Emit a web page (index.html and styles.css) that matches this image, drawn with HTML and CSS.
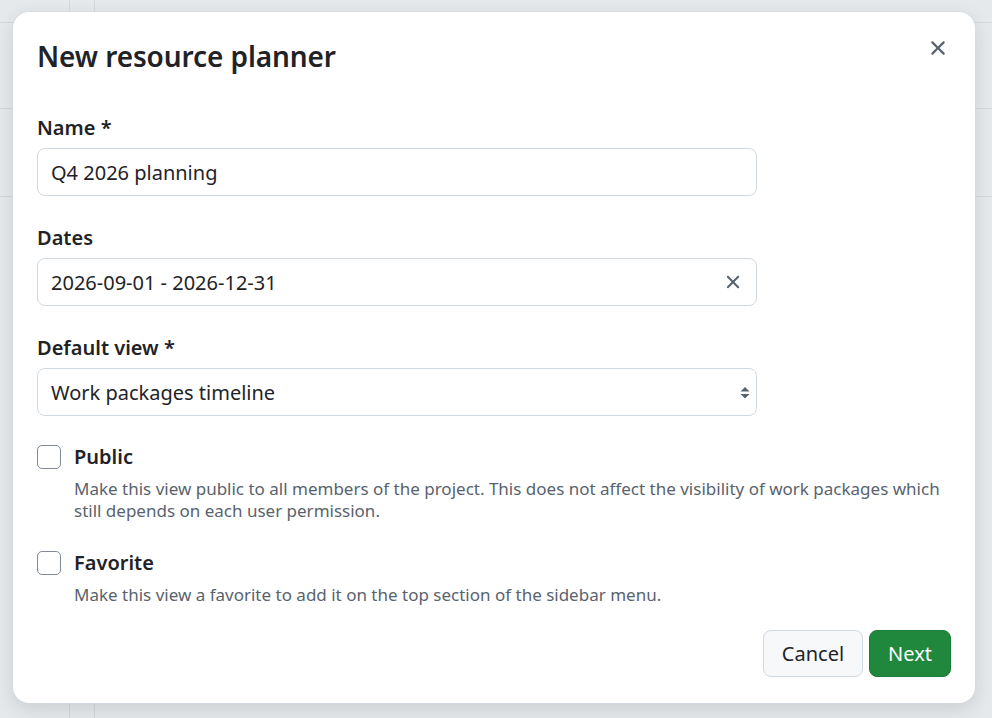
FILE: index.html
```html
<!DOCTYPE html>
<html lang="en">
<head>
<meta charset="utf-8">
<title>New resource planner</title>
<link rel="stylesheet" href="styles.css">
</head>
<body>
<div class="page">
  <section class="dialog" role="dialog" aria-labelledby="dlg-title">
    <header class="dialog-header">
      <h1 id="dlg-title" class="dialog-title">New resource planner</h1>
      <button class="icon-btn close-btn" type="button" aria-label="Close">
        <svg width="24" height="24" viewBox="0 0 16 16" aria-hidden="true"><path d="M3.72 3.72a.75.75 0 0 1 1.06 0L8 6.94l3.22-3.22a.749.749 0 0 1 1.275.326.749.749 0 0 1-.215.734L9.06 8l3.22 3.22a.749.749 0 0 1-.326 1.275.749.749 0 0 1-.734-.215L8 9.06l-3.22 3.22a.751.751 0 0 1-1.042-.018.751.751 0 0 1-.018-1.042L6.94 8 3.72 4.78a.75.75 0 0 1 0-1.06Z"/></svg>
      </button>
    </header>

    <form class="dialog-body">
      <div class="field">
        <label class="field-label" for="name">Name *</label>
        <div class="control">
          <input id="name" class="control-input" type="text" value="Q4 2026 planning">
        </div>
      </div>

      <div class="field">
        <label class="field-label" for="dates">Dates</label>
        <div class="control">
          <input id="dates" class="control-input" type="text" value="2026-09-01 - 2026-12-31">
          <span class="control-clear" aria-hidden="true">
            <svg width="22" height="22" viewBox="0 0 16 16"><path d="M3.72 3.72a.75.75 0 0 1 1.06 0L8 6.94l3.22-3.22a.749.749 0 0 1 1.275.326.749.749 0 0 1-.215.734L9.06 8l3.22 3.22a.749.749 0 0 1-.326 1.275.749.749 0 0 1-.734-.215L8 9.06l-3.22 3.22a.751.751 0 0 1-1.042-.018.751.751 0 0 1-.018-1.042L6.94 8 3.72 4.78a.75.75 0 0 1 0-1.06Z"/></svg>
          </span>
        </div>
      </div>

      <div class="field field-last">
        <label class="field-label" for="view">Default view *</label>
        <div class="control">
          <div id="view" class="control-input control-select">Work packages timeline</div>
          <span class="select-caret" aria-hidden="true">
            <svg width="12" height="20" viewBox="0 0 12 20"><path d="M6 5 10.5 9.5h-9Z"/><path d="M1.5 12h9L6 16.5Z"/></svg>
          </span>
        </div>
      </div>

      <div class="check">
        <div class="check-row">
          <span class="check-box"></span>
          <span class="check-label">Public</span>
        </div>
        <p class="check-caption">Make this view public to all members of the project. This does not affect the visibility of work packages which still depends on each user permission.</p>
      </div>

      <div class="check">
        <div class="check-row">
          <span class="check-box"></span>
          <span class="check-label">Favorite</span>
        </div>
        <p class="check-caption">Make this view a favorite to add it on the top section of the sidebar menu.</p>
      </div>

      <footer class="dialog-footer">
        <button class="btn btn-default" type="button">Cancel</button>
        <button class="btn btn-primary" type="button">Next</button>
      </footer>
    </form>
  </section>
</div>
</body>
</html>
```

FILE: styles.css
```css
* {
  box-sizing: border-box;
}

html,
body {
  margin: 0;
  height: 100%;
}

body {
  font-family: "Noto Sans", "Open Sans", "DejaVu Sans", sans-serif;
  color: #1f2328;
  background-color: #e6e9ec;
  /* faint grid of the page that sits under the overlay */
  background-image:
    linear-gradient(to right, transparent 69px, #d3d8dd 69px, #d3d8dd 70px, transparent 70px),
    linear-gradient(to right, transparent 94px, #d3d8dd 94px, #d3d8dd 95px, transparent 95px),
    linear-gradient(to bottom, transparent 22px, #d3d8dd 22px, #d3d8dd 23px, transparent 23px),
    linear-gradient(to bottom, transparent 108px, #d3d8dd 108px, #d3d8dd 109px, transparent 109px),
    linear-gradient(to bottom, transparent 196px, #d3d8dd 196px, #d3d8dd 197px, transparent 197px);
  overflow: hidden;
}

.page {
  padding: 12px 0 0 13px;
}

.dialog {
  width: 962px;
  background: #ffffff;
  border-radius: 16px;
  box-shadow: 0 0 0 1px rgba(209, 217, 224, 0.5), 0 6px 18px rgba(37, 41, 46, 0.14);
  padding: 26px 24px 26px 24px;
}

.dialog-header {
  display: flex;
  align-items: flex-start;
  justify-content: space-between;
  margin-bottom: 40px;
}

.dialog-title {
  margin: 0;
  font-size: 28px;
  line-height: 36px;
  font-weight: 600;
  letter-spacing: -0.1px;
}

.icon-btn {
  display: flex;
  align-items: center;
  justify-content: center;
  border: 0;
  background: transparent;
  padding: 0;
  color: #59636e;
}

.close-btn {
  width: 32px;
  height: 32px;
  margin-top: -6px;
  margin-right: -3px;
}

.close-btn svg {
  fill: #59636e;
}

.dialog-body {
  display: flex;
  flex-direction: column;
}

.field {
  display: flex;
  flex-direction: column;
  gap: 6px;
  margin-bottom: 28px;
  width: 720px;
}

.field-last {
  margin-bottom: 27px;
}

.field-label {
  font-size: 20px;
  line-height: 28px;
  font-weight: 600;
}

.control {
  position: relative;
  display: flex;
  align-items: center;
}

.control-input {
  width: 100%;
  height: 48px;
  border: 1px solid #d1d9e0;
  border-radius: 8px;
  background: #ffffff;
  padding: 1px 13px 0 13px;
  font-family: inherit;
  font-size: 20px;
  color: #1f2328;
  outline: none;
}

.control-select {
  display: flex;
  align-items: center;
}

.control-clear {
  position: absolute;
  right: 13px;
  top: 50%;
  transform: translateY(-50%);
  display: flex;
  fill: #59636e;
}

.select-caret {
  position: absolute;
  right: 6px;
  top: 50%;
  transform: translateY(-50%);
  display: flex;
  fill: #59636e;
}

.check {
  display: flex;
  flex-direction: column;
  margin-bottom: 27px;
}

.check-row {
  display: flex;
  align-items: center;
  gap: 13px;
  height: 28px;
}

.check-box {
  width: 24px;
  height: 24px;
  border: 1.5px solid #818b98;
  border-radius: 5px;
  background: #ffffff;
  flex: none;
}

.check-label {
  font-size: 20px;
  line-height: 28px;
  font-weight: 600;
}

.check-caption {
  margin: 7px 0 0 37px;
  font-size: 17px;
  line-height: 22px;
  color: #59636e;
}

.dialog-footer {
  display: flex;
  justify-content: flex-end;
  gap: 6px;
  margin-top: -3px;
}

.btn {
  height: 47px;
  padding: 0 18px;
  border-radius: 8px;
  font-family: inherit;
  font-size: 20px;
  line-height: 1;
  cursor: pointer;
}

.btn-default {
  background: #f6f8fa;
  border: 1px solid #d1d9e0;
  color: #1f2328;
}

.btn-primary {
  background: #1f883d;
  border: 1px solid #1c7d38;
  color: #ffffff;
}
```
